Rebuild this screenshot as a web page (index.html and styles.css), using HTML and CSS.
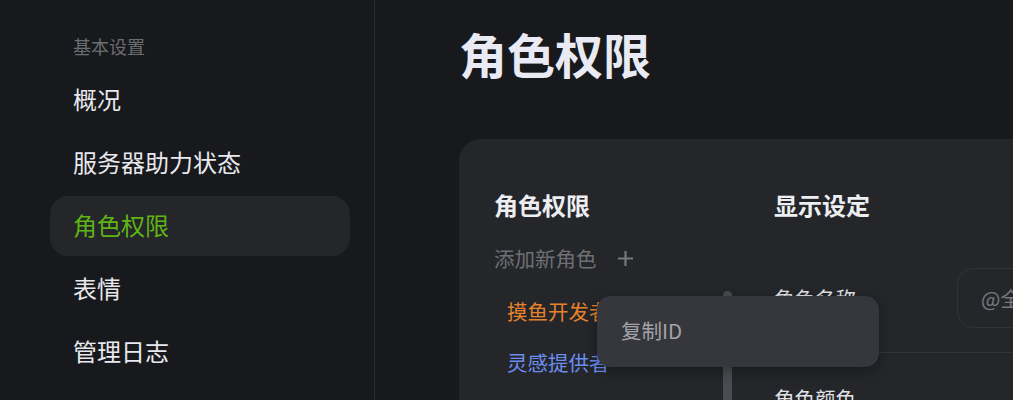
FILE: index.html
```html
<!DOCTYPE html>
<html lang="zh-CN">
<head>
<meta charset="utf-8">
<title>角色权限</title>
<link rel="stylesheet" href="styles.css">
</head>
<body>
<aside class="sidebar">
  <div class="group-label">基本设置</div>
  <nav class="nav">
    <div class="nav-item">概况</div>
    <div class="nav-item">服务器助力状态</div>
    <div class="nav-item active">角色权限</div>
    <div class="nav-item">表情</div>
    <div class="nav-item">管理日志</div>
  </nav>
</aside>
<main class="main">
  <h1 class="page-title">角色权限</h1>
  <section class="card">
    <div class="roles">
      <h2 class="card-heading">角色权限</h2>
      <div class="add-role">添加新角色
        <svg class="plus" width="17" height="17" viewBox="0 0 17 17"><path d="M8.5 1v15M1 8.5h15" stroke="currentColor" stroke-width="2.2" fill="none"/></svg>
      </div>
      <div class="role role-orange">摸鱼开发者</div>
      <div class="role role-blue">灵感提供者</div>
    </div>
    <div class="scrollbar"></div>
    <div class="settings">
      <h2 class="card-heading">显示设定</h2>
      <div class="setting-row">
        <div class="setting-label">角色名称</div>
        <div class="input">@全体成员</div>
      </div>
      <div class="setting-row setting-row-low">
        <div class="setting-label">角色颜色</div>
      </div>
    </div>
    <div class="context-menu">
      <div class="menu-item">复制ID</div>
    </div>
  </section>
</main>
</body>
</html>
```

FILE: styles.css
```css
* { box-sizing: border-box; }
html, body {
  margin: 0;
  height: 400px;
  overflow: hidden;
}
body {
  display: flex;
  background: #18191c;
  font-family: "Noto Sans CJK SC", "Noto Sans", sans-serif;
  color: #e4e5ea;
}
.sidebar {
  width: 375px;
  flex: none;
  border-right: 1px solid #2a2b2f;
  padding: 34px 0 0 50px;
}
.group-label {
  font-size: 18px;
  line-height: 24px;
  color: #6c6d72;
  padding-left: 23px;
  margin-bottom: 12px;
}
.nav {
  display: flex;
  flex-direction: column;
  gap: 3px;
  width: 300px;
}
.nav-item {
  height: 60px;
  display: flex;
  align-items: center;
  padding: 0 0 3px 23px;
  font-size: 24px;
  color: #e8e9ee;
  border-radius: 18px;
}
.nav-item.active {
  background: #25262a;
  color: #5fb515;
}
.main {
  flex: 1;
  padding: 23px 0 0 84px;
  min-width: 0;
}
.page-title {
  margin: 0;
  font-size: 48px;
  line-height: 60px;
  font-weight: 700;
  color: #e9eaf3;
}
.card {
  position: relative;
  margin-top: 56px;
  width: 700px;
  height: 400px;
  background: #25262a;
  border-radius: 22px;
  padding: 50px 0 0 35px;
  display: flex;
}
.card-heading {
  margin: 0;
  font-size: 24px;
  line-height: 32px;
  font-weight: 700;
  color: #eceef2;
}
.roles {
  width: 229px;
  flex: none;
}
.add-role {
  margin-top: 23px;
  display: flex;
  align-items: center;
  gap: 20px;
  font-size: 20.5px;
  line-height: 28px;
  color: #6f7075;
}
.plus { color: #77787d; }
.role {
  height: 51px;
  display: flex;
  align-items: center;
  padding-left: 13px;
  font-size: 20.5px;
}
.role-orange { margin-top: 13px; color: #e7822a; }
.role-blue { color: #6c8df0; }
.scrollbar {
  width: 9px;
  flex: none;
  margin-top: 102px;
  background: #4b4c51;
  border-radius: 5px 5px 0 0;
}
.settings {
  margin-left: 42px;
  flex: 1;
}
.setting-row {
  display: flex;
  align-items: center;
  border-bottom: 1px solid #34353a;
  padding: 24px 0;
}
.settings .setting-row:first-of-type { margin-top: 23px; }
.setting-row-low { padding-top: 31px; }
.setting-label {
  width: 183px;
  font-size: 20.5px;
  line-height: 28px;
  color: #e2e3e8;
}
.input {
  flex: 1;
  height: 60px;
  border: 1px solid #323338;
  border-radius: 16px;
  padding-left: 23px;
  display: flex;
  align-items: center;
  font-size: 20.5px;
  color: #77787d;
}
.context-menu {
  position: absolute;
  left: 138px;
  top: 157px;
  width: 282px;
  height: 71px;
  background: #36373c;
  border-radius: 14px;
  box-shadow: 0 4px 14px rgba(0, 0, 0, 0.35);
  display: flex;
  align-items: center;
  padding: 0 0 3px 24px;
}
.menu-item {
  font-size: 20.5px;
  color: #a2a3a8;
}
```
